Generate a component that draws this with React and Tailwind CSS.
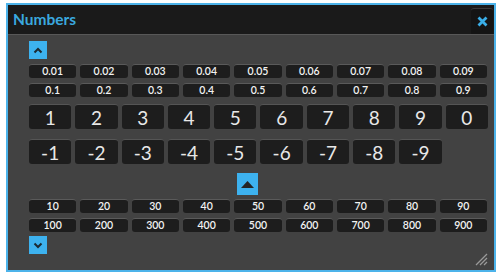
import React from "react";

const decimals1 = ["0.01", "0.02", "0.03", "0.04", "0.05", "0.06", "0.07", "0.08", "0.09"];
const decimals2 = ["0.1", "0.2", "0.3", "0.4", "0.5", "0.6", "0.7", "0.8", "0.9"];
const digits = ["1", "2", "3", "4", "5", "6", "7", "8", "9", "0"];
const negatives = ["-1", "-2", "-3", "-4", "-5", "-6", "-7", "-8", "-9"];
const tens = ["10", "20", "30", "40", "50", "60", "70", "80", "90"];
const hundreds = ["100", "200", "300", "400", "500", "600", "700", "800", "900"];

function SmallKey({ label }) {
  return (
    <div className="flex h-[14px] items-center justify-center rounded-[3px] border-t border-[#5a5a5a] bg-[#1d1d1d] text-[10.5px] font-semibold leading-none text-[#f2f2f2]">
      {label}
    </div>
  );
}

function BigKey({ label }) {
  return (
    <div className="flex h-[25px] items-center justify-center rounded-[3px] border-t border-[#555] bg-[#1d1d1d] text-[19px] font-normal leading-none text-[#e8e8e8]">
      {label}
    </div>
  );
}

function SmallRow({ items }) {
  return (
    <div className="grid w-[458px] grid-cols-9 gap-x-[4px]">
      {items.map((n) => (
        <SmallKey key={n} label={n} />
      ))}
    </div>
  );
}

function Chevron({ down }) {
  return (
    <div className="flex h-[18px] w-[18px] items-center justify-center bg-[#3db2ef]">
      <svg width="10" height="7" viewBox="0 0 10 7" className={down ? "rotate-180" : ""}>
        <path d="M1.5 5.5 L5 2 L8.5 5.5" fill="none" stroke="#1b2a33" strokeWidth="2" />
      </svg>
    </div>
  );
}

export default function App() {
  return (
    <div
      className="h-[277px] w-[500px] bg-white pl-[6px] pt-[3px]"
      style={{ fontFamily: "Lato, 'Open Sans', sans-serif" }}
    >
      <div className="flex h-[269px] w-[490px] flex-col border-2 border-[#4cb3ea] bg-[#424242]">
        <div className="flex h-[30px] items-center justify-between border-b border-[#585858] bg-[#1a1a1a] pl-[5px] pr-[1px]">
          <span className="text-[15.5px] font-bold text-[#3aa8df]">Numbers</span>
          <div className="flex h-[26px] w-[22px] items-center justify-center self-end rounded-t-[3px] border-t border-[#3a3a3a] bg-[#141414]">
            <svg width="11" height="11" viewBox="0 0 11 11">
              <path d="M1.5 1.5 L9.5 9.5 M9.5 1.5 L1.5 9.5" stroke="#3aaee8" strokeWidth="2.8" />
            </svg>
          </div>
        </div>

        <div className="relative flex flex-1 flex-col pl-[21px] pt-[6px]">
          <Chevron />
          <div className="mt-[5px] flex flex-col gap-[5px]">
            <SmallRow items={decimals1} />
            <SmallRow items={decimals2} />
          </div>

          <div className="mt-[7px] grid w-[459px] grid-cols-10 gap-x-[4px] gap-y-[10px]">
            {digits.map((n) => (
              <BigKey key={n} label={n} />
            ))}
            {negatives.map((n) => (
              <BigKey key={n} label={n} />
            ))}
          </div>

          <div className="ml-[208px] mt-[9px] flex h-[22px] w-[21px] items-center justify-center bg-[#3db2ef]">
            <svg width="13" height="7" viewBox="0 0 13 7">
              <path d="M0 7 L6.5 0 L13 7 Z" fill="#252525" />
            </svg>
          </div>

          <div className="mt-[4px] flex flex-col gap-[5px]">
            <SmallRow items={tens} />
            <SmallRow items={hundreds} />
          </div>

          <div className="mt-[4px]">
            <Chevron down />
          </div>

          <svg
            width="13"
            height="13"
            viewBox="0 0 13 13"
            className="absolute bottom-[4px] right-[6px]"
          >
            <path d="M12 1 L1 12 M12 5 L5 12 M12 9 L9 12" stroke="#9a9a9a" strokeWidth="1.3" />
          </svg>
        </div>
      </div>
    </div>
  );
}
